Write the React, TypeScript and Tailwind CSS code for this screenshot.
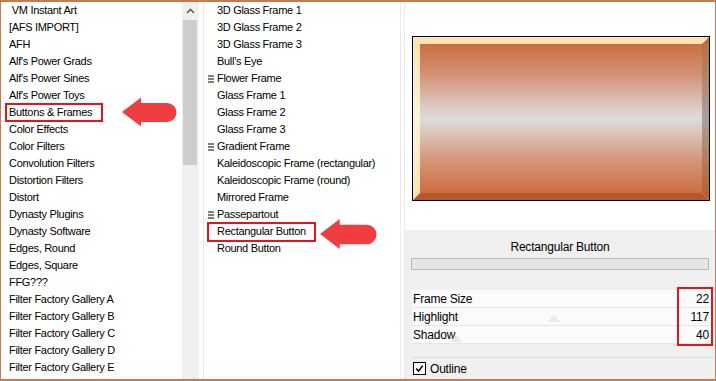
import React from 'react'

const leftItems = [
  '\u00a0VM Instant Art',
  '[AFS IMPORT]',
  'AFH',
  "Alf's Power Grads",
  "Alf's Power Sines",
  "Alf's Power Toys",
  'Buttons & Frames',
  'Color Effects',
  'Color Filters',
  'Convolution Filters',
  'Distortion Filters',
  'Distort',
  'Dynasty Plugins',
  'Dynasty Software',
  'Edges, Round',
  'Edges, Square',
  'FFG???',
  'Filter Factory Gallery A',
  'Filter Factory Gallery B',
  'Filter Factory Gallery C',
  'Filter Factory Gallery D',
  'Filter Factory Gallery E',
]

const middleItems: { label: string; grip?: boolean; marked?: boolean }[] = [
  { label: '3D Glass Frame 1' },
  { label: '3D Glass Frame 2' },
  { label: '3D Glass Frame 3' },
  { label: "Bull's Eye" },
  { label: 'Flower Frame', grip: true },
  { label: 'Glass Frame 1' },
  { label: 'Glass Frame 2' },
  { label: 'Glass Frame 3' },
  { label: 'Gradient Frame', grip: true },
  { label: 'Kaleidoscopic Frame (rectangular)' },
  { label: 'Kaleidoscopic Frame (round)' },
  { label: 'Mirrored Frame' },
  { label: 'Passepartout', grip: true },
  { label: 'Rectangular Button', marked: true },
  { label: 'Round Button' },
]

const params = [
  { label: 'Frame Size', value: 22 },
  { label: 'Highlight', value: 117 },
  { label: 'Shadow', value: 40 },
]

function Arrow({ className }: { className: string }) {
  return (
    <svg className={className} viewBox="0 0 56 32" fill="none">
      <path
        d="M1 16 L20 1.5 L20 7 L46 7 A9.5 9.5 0 0 1 46 26 L20 26 L20 30.5 Z"
        fill="#ef3d42"
      />
    </svg>
  )
}

function Grip() {
  return (
    <span className="absolute left-[4px] top-[5px] flex w-[6px] flex-col gap-[1px]">
      <span className="h-[2px] bg-[#808080]" />
      <span className="h-[2px] bg-[#808080]" />
      <span className="h-[2px] bg-[#808080]" />
    </span>
  )
}

function Preview() {
  return (
    <svg width="298" height="165" viewBox="0 0 298 165">
      <defs>
        <linearGradient id="face" x1="0" y1="0" x2="0" y2="1">
          <stop offset="0" stopColor="#cc6e3f" />
          <stop offset="0.22" stopColor="#d4957a" />
          <stop offset="0.4" stopColor="#dbc5bb" />
          <stop offset="0.5" stopColor="#dcdcdc" />
          <stop offset="0.6" stopColor="#dbc5bb" />
          <stop offset="0.78" stopColor="#d4957a" />
          <stop offset="1" stopColor="#cc6e3f" />
        </linearGradient>
        <linearGradient id="leftBevel" x1="0" y1="0" x2="0" y2="1">
          <stop offset="0" stopColor="#fde2ae" />
          <stop offset="0.5" stopColor="#fff4da" />
          <stop offset="1" stopColor="#fde2ae" />
        </linearGradient>
        <linearGradient id="rightBevel" x1="0" y1="0" x2="0" y2="1">
          <stop offset="0" stopColor="#b96a3e" />
          <stop offset="0.5" stopColor="#a9a29e" />
          <stop offset="1" stopColor="#b55c2d" />
        </linearGradient>
      </defs>
      <polygon points="1,1 297,1 290,8 8,8" fill="#fde4b2" />
      <polygon points="1,1 8,8 8,157 1,164" fill="url(#leftBevel)" />
      <polygon points="297,1 297,164 290,157 290,8" fill="url(#rightBevel)" />
      <polygon points="1,164 8,157 290,157 297,164" fill="#b5592a" />
      <rect x="8" y="8" width="282" height="149" fill="url(#face)" />
      <rect x="0.5" y="0.5" width="297" height="164" stroke="#000" fill="none" />
    </svg>
  )
}

export default function App() {
  return (
    <div className="relative flex h-[381px] w-[716px] overflow-hidden border-x border-y-2 border-[#c8794e] bg-white font-['Liberation_Sans',Arial,sans-serif] text-[11px] tracking-[-0.3px] text-black">
      {/* category list */}
      <div className="w-[181px] pt-0">
        {leftItems.map((item, i) => (
          <div key={item} className="relative h-[17px] pl-[8px] leading-[17px] whitespace-nowrap">
            {item}
            {i === 6 && (
              <span className="absolute left-[4px] top-[-1px] h-[19px] w-[98px] border-2 border-[#e3151b]" />
            )}
          </div>
        ))}
      </div>

      {/* scrollbar */}
      <div className="w-[17px] bg-[#f0f0f0]">
        <div className="flex h-[18px] items-center justify-center">
          <svg width="9" height="6" viewBox="0 0 9 6">
            <path d="M1 5 L4.5 1.5 L8 5" stroke="#606060" strokeWidth="1.6" fill="none" />
          </svg>
        </div>
        <div className="ml-[1px] h-[145px] w-[14px] bg-[#cdcdcd]" />
      </div>
      <div className="w-[5px] border-r border-[#e6e6e6]" />

      {/* filter list */}
      <div className="w-[197px] border-r border-[#ececec]">
        {middleItems.map((item) => (
          <div key={item.label} className="relative h-[17px] pl-[13px] leading-[17px] whitespace-nowrap">
            {item.grip && <Grip />}
            {item.label}
            {item.marked && (
              <span className="absolute left-[3px] top-[-1px] h-[20px] w-[109px] border-2 border-[#e3151b]" />
            )}
          </div>
        ))}
      </div>
      <div className="w-[3px]" />

      {/* settings panel */}
      <div className="flex flex-1 flex-col border-l border-[#e8e8e8]">
        <div className="h-[228px] pl-[7px] pt-[34px]">
          <Preview />
        </div>
        <div className="flex flex-1 flex-col bg-[#f0f0f0] pl-[6px] pr-[2px]">
          <div className="mt-[6px] mr-[4px] flex h-[22px] items-center justify-center text-[12px] tracking-[-0.2px]">
            Rectangular Button
          </div>
          <div className="mr-[4px] h-[12px] border border-[#bcbcbc] bg-[#e6e6e6]" />
          <div className="relative mt-[20px] ml-[1px]">
            {params.map((p) => (
              <div
                key={p.label}
                className="relative flex h-[18px] items-center justify-between border-b border-[#e6e6e6] bg-[#fbfbfb] pl-[1px] pr-[4px] text-[12px] tracking-[-0.2px]"
              >
                <span>{p.label}</span>
                <span>{p.value}</span>
              </div>
            ))}
            <svg className="absolute left-[136px] top-[24px]" width="12" height="8" viewBox="0 0 12 8">
              <path d="M0 8 L6 1 L12 8 Z" fill="#e9e9e9" />
            </svg>
            <svg className="absolute left-[38px] top-[44px]" width="12" height="8" viewBox="0 0 12 8">
              <path d="M0 8 L6 1 L12 8 Z" fill="#e9e9e9" />
            </svg>
            <span className="absolute left-[265px] top-[-3px] h-[59px] w-[36px] border-2 border-[#e3151b]" />
          </div>
          <div className="mt-[13px] ml-[1px] h-px bg-[#dadada]" />
          <div className="flex flex-1 items-center gap-[4px] pl-[2px] text-[12px] tracking-[-0.2px]">
            <span className="flex h-[13px] w-[13px] items-center justify-center border border-black bg-white">
              <svg width="9" height="9" viewBox="0 0 9 9">
                <path d="M1.2 4.6 L3.6 7 L7.8 1.6" stroke="#000" strokeWidth="1.5" fill="none" />
              </svg>
            </span>
            <span>Outline</span>
          </div>
        </div>
      </div>

      <Arrow className="absolute left-[120px] top-[94px] h-[32px] w-[56px]" />
      <Arrow className="absolute left-[318px] top-[215px] h-[34px] w-[58px]" />
    </div>
  )
}
